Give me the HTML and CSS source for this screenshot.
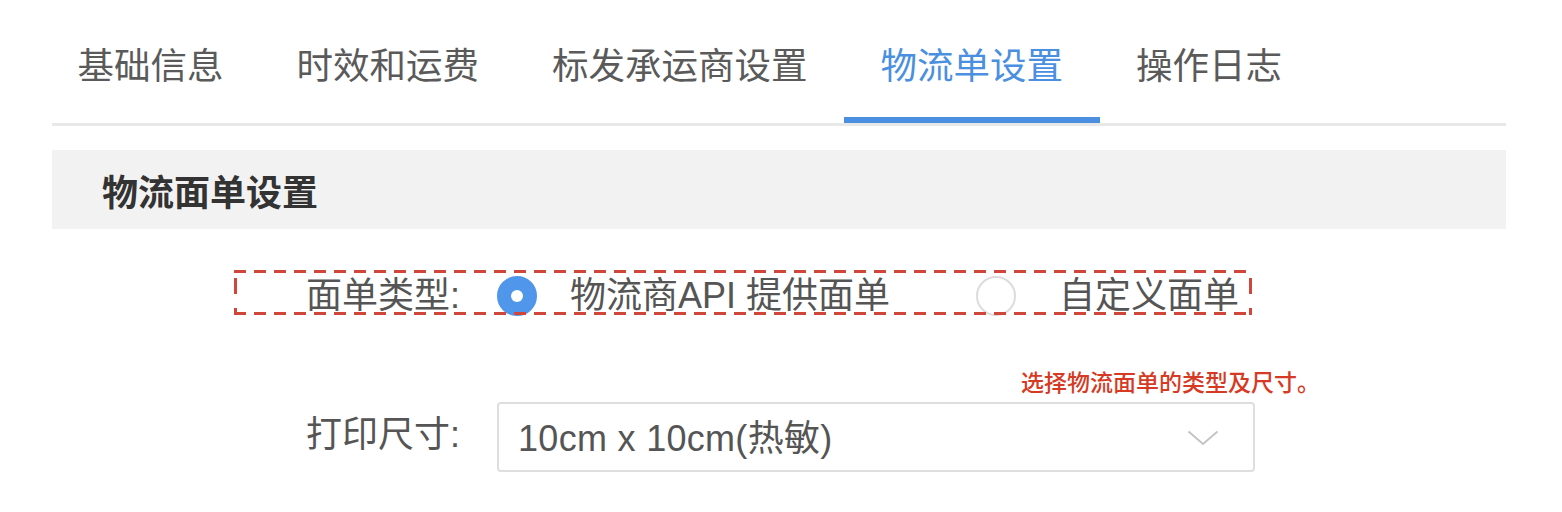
FILE: index.html
```html
<!DOCTYPE html>
<html lang="zh-CN">
<head>
<meta charset="utf-8">
<title>物流单设置</title>
<link rel="stylesheet" href="styles.css">
</head>
<body>
<div class="page">
  <nav class="tabs">
    <div class="tab">基础信息</div>
    <div class="tab">时效和运费</div>
    <div class="tab">标发承运商设置</div>
    <div class="tab active">物流单设置</div>
    <div class="tab">操作日志</div>
  </nav>
  <div class="section-head">物流面单设置</div>
  <div class="form">
    <div class="row row-type">
      <div class="label">面单类型:</div>
      <div class="options">
        <div class="option checked"><span class="radio"></span><span class="opt-text">物流商API 提供面单</span></div>
        <div class="option second"><span class="radio"></span><span class="opt-text">自定义面单</span></div>
      </div>
    </div>
    <div class="note">选择物流面单的类型及尺寸。</div>
    <div class="row">
      <div class="label">打印尺寸:</div>
      <div class="select">
        <span class="select-text">10cm x 10cm(热敏)</span>
        <svg class="chev" width="32" height="16" viewBox="0 0 32 16"><path d="M1.5 1.5 L16 14 L30.5 1.5" fill="none" stroke="#c4c4c4" stroke-width="2"/></svg>
      </div>
    </div>
  </div>
</div>
</body>
</html>
```
FILE: styles.css
```css
* { box-sizing: border-box; }
html, body { margin: 0; padding: 0; background: #fff; }
body {
  font-family: "Liberation Sans", "Noto Sans CJK SC", sans-serif;
  color: #555;
}
.page {
  width: 1562px;
  padding: 0 56px 0 52px;
}
.tabs {
  display: flex;
  border-bottom: 3px solid #e8e8e8;
}
.tab {
  font-family: "Noto Sans CJK SC", sans-serif;
  font-size: 36.5px;
  line-height: 36px;
  color: #5a5a5a;
  padding: 46px 36.5px 35px;
  border-bottom: 6px solid transparent;
}
.tab:first-child { margin-left: -11px; }
.tab.active {
  color: #4a8fe0;
  border-bottom-color: #4a8fe0;
}
.section-head {
  margin-top: 24px;
  height: 79px;
  background: #f2f2f2;
  padding-left: 50px;
  font-family: "Noto Sans CJK SC", sans-serif;
  font-size: 36px;
  font-weight: 700;
  color: #333;
  display: flex;
  align-items: center;
}
.form {
  padding-left: 182px;
  padding-top: 41px;
}
.row {
  display: flex;
  align-items: center;
  gap: 37px;
}
.row-type {
  position: relative;
  width: 1018px;
  height: 52px;
}
.row-type::after {
  content: "";
  position: absolute;
  left: 0; top: 0; right: 0;
  height: 45px;
  pointer-events: none;
  background:
    repeating-linear-gradient(90deg, #d0463b 0 12px, transparent 12px 20px) left top / 100% 3px no-repeat,
    repeating-linear-gradient(90deg, #d0463b 0 12px, transparent 12px 20px) left bottom / 100% 3px no-repeat,
    repeating-linear-gradient(180deg, transparent 0 8px, #d0463b 8px 24px, transparent 24px 30px) left top / 3px 100% no-repeat,
    repeating-linear-gradient(180deg, transparent 0 8px, #d0463b 8px 24px, transparent 24px 30px) right top / 3px 100% no-repeat;
}
.label {
  width: 226px;
  text-align: right;
  font-size: 36px;
  line-height: 40px;
  color: #555;
  flex: none;
}
.options {
  display: flex;
  align-items: center;
}
.option {
  display: flex;
  align-items: center;
  gap: 33px;
  font-size: 36px;
  line-height: 40px;
  color: #555;
}
.option.second {
  margin-left: 86px;
  gap: 43px;
}
.radio {
  width: 40px;
  height: 40px;
  border-radius: 50%;
  border: 2px solid #dcdcdc;
  background: #fff;
  flex: none;
  position: relative;
}
.option.checked .radio {
  border-color: #5096ea;
  background: #5096ea;
}
.option.checked .radio::after {
  content: "";
  position: absolute;
  left: 50%; top: 50%;
  width: 12px; height: 12px;
  margin: -6px 0 0 -6px;
  border-radius: 50%;
  background: #fff;
}
.note {
  margin-top: 43px;
  margin-left: 787px;
  font-family: "Noto Sans CJK SC", sans-serif;
  font-size: 23px;
  line-height: 32px;
  font-weight: 500;
  color: #d63a24;
  white-space: nowrap;
}
.select {
  width: 758px;
  height: 70px;
  border: 2px solid #dedede;
  border-radius: 4px;
  margin-top: 5px;
  display: flex;
  align-items: center;
  justify-content: space-between;
  padding: 0 34px 4px 19px;
}
.select-text {
  font-size: 36px;
  letter-spacing: 0.3px;
  color: #555;
}
.chev { display: block; margin-top: 6px; }
```
